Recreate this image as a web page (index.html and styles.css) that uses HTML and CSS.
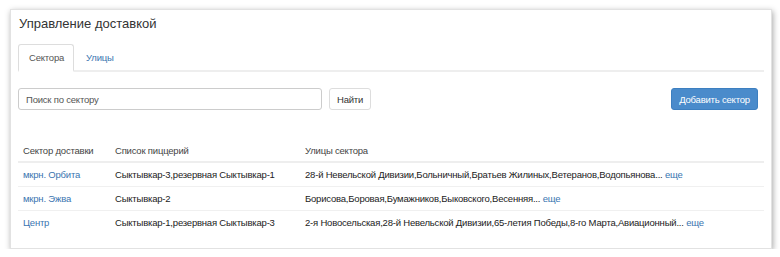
FILE: index.html
```html
<!DOCTYPE html>
<html lang="ru">
<head>
    <meta charset="UTF-8">
    <title>Управление доставкой</title>
    <link rel="stylesheet" href="styles.css">
</head>
<body>

    <!-- Panel -->
    <div class="panel">
        <h3 class="panel-title">Управление доставкой</h3>

        <!-- Tabs -->
        <ul class="tabs">
            <li class="tab active">Сектора</li>
            <li class="tab">Улицы</li>
        </ul>

        <!-- Toolbar -->
        <div class="toolbar">
            <input class="search" type="text" placeholder="Поиск по сектору">
            <button class="btn">Найти</button>
            <button class="btn btn-primary">Добавить сектор</button>
        </div>

        <!-- Sectors table -->
        <table class="sectors">
            <thead>
                <tr>
                    <th class="col-name">Сектор доставки</th>
                    <th class="col-pizza">Список пиццерий</th>
                    <th>Улицы сектора</th>
                </tr>
            </thead>
            <tbody>
                <tr>
                    <td><a href="#">мкрн. Орбита</a></td>
                    <td>Сыктывкар-3,резервная Сыктывкар-1</td>
                    <td>28-й Невельской Дивизии,Больничный,Братьев Жилиных,Ветеранов,Водопьянова... <a href="#">еще</a></td>
                </tr>
                <tr>
                    <td><a href="#">мкрн. Эжва</a></td>
                    <td>Сыктывкар-2</td>
                    <td>Борисова,Боровая,Бумажников,Быковского,Весенняя... <a href="#">еще</a></td>
                </tr>
                <tr>
                    <td><a href="#">Центр</a></td>
                    <td>Сыктывкар-1,резервная Сыктывкар-3</td>
                    <td>2-я Новосельская,28-й Невельской Дивизии,65-летия Победы,8-го Марта,Авиационный... <a href="#">еще</a></td>
                </tr>
            </tbody>
        </table>
    </div>

</body>
</html>
```

FILE: styles.css
```css
/* General */
body {
    margin: 0;
    background: #fff;
    font-family: "Liberation Sans", Arial, sans-serif;
    font-size: 9.5px;
    letter-spacing: -0.2px;
    color: #333;
}

a {
    color: #3a75b0;
    text-decoration: none;
}

/* Panel */
.panel {
    margin: 9px 0 0 10px;
    width: 746px;
    height: 238px;
    padding: 0 7px;
    border: 1px solid #e2e2e2;
    background: #fff;
    box-shadow: 1px 2px 6px rgba(0, 0, 0, 0.35);
}

.panel-title {
    margin: 0;
    padding: 6px 0 0 1px;
    height: 28px;
    line-height: 16px;
    font-size: 13px;
    font-weight: normal;
    letter-spacing: 0;
    color: #333;
}

/* Tabs */
.tabs {
    display: flex;
    list-style: none;
    margin: 0;
    padding: 0;
    border-bottom: 2px solid #eee;
}

.tab {
    height: 26px;
    line-height: 26px;
    padding: 0 9px 0 10px;
    margin-bottom: -2px;
    border: 1px solid transparent;
    border-radius: 3px 3px 0 0;
    color: #3a75b0;
}

.tab.active {
    color: #555;
    background: #fff;
    border-color: #ddd;
    border-bottom: 2px solid #fff;
    height: 25px;
}

.tab + .tab {
    margin-left: 1px;
}

/* Toolbar */
.toolbar {
    display: flex;
    align-items: center;
    gap: 7px;
    margin-top: 16px;
}

.search {
    box-sizing: border-box;
    width: 304px;
    height: 22px;
    padding: 0 7px;
    border: 1px solid #ccc;
    border-radius: 3px;
    font: inherit;
    letter-spacing: inherit;
    color: #555;
    outline: none;
}

.search::placeholder {
    color: #555;
}

.btn {
    box-sizing: border-box;
    height: 22px;
    padding: 0 7px;
    border: 1px solid #ddd;
    border-radius: 3px;
    background: #fff;
    font: inherit;
    letter-spacing: inherit;
    color: #333;
}

.btn-primary {
    margin-left: auto;
    margin-right: 6px;
    width: 87px;
    padding: 0;
    border-color: #3d7fc0;
    background: #4a8bcb;
    color: #fff;
}

/* Table */
.sectors {
    width: 100%;
    margin-top: 29px;
    border-collapse: collapse;
}

.sectors th,
.sectors td {
    padding: 0 5px;
    text-align: left;
    white-space: nowrap;
}

.sectors th {
    height: 22px;
    font-weight: normal;
    color: #444;
    border-bottom: 2px solid #eee;
}

.sectors td {
    height: 23px;
    color: #222;
    border-top: 1px solid #f0f0f0;
}

.sectors tbody tr:first-child td {
    border-top: none;
}

.col-name {
    width: 82px;
}

.col-pizza {
    width: 180px;
}
```
